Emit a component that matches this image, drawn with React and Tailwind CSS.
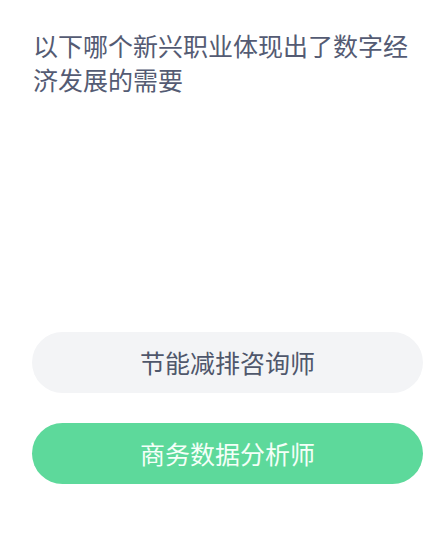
import React from 'react';

const options = [
    { id: 1, label: '节能减排咨询师', correct: false },
    { id: 2, label: '商务数据分析师', correct: true },
];

export default function App() {
    return (
        <div
            className="w-[447px] h-[546px] bg-white flex flex-col px-[33px] pt-[28px]"
            style={{ fontFamily: '"Noto Sans CJK SC", "Noto Sans", sans-serif' }}
        >
            <p className="text-[25px] leading-[34px] text-[#545b73]">
                以下哪个新兴职业体现出了数字经济发展的需要
            </p>

            <div className="mt-[236px] flex flex-col gap-[30px]">
                {options.map(opt => (
                    <button
                        key={opt.id}
                        className={`h-[61px] w-[391px] -ml-[1px] rounded-full flex items-center justify-center text-[25px] ${opt.correct ? 'bg-[#5dd99b] text-[#f4fff8]' : 'bg-[#f3f4f6] text-[#4f576b]'}`}
                    >
                        {opt.label}
                    </button>
                ))}
            </div>
        </div>
    );
}
